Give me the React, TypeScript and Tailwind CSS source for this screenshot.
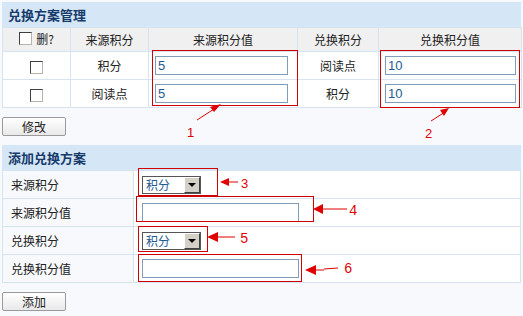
import React from "react";

const cjk = "font-['Noto_Sans_CJK_SC','Liberation_Sans',sans-serif]";

// ── small widgets ────────────────────────────────────────────────────────────

function Check() {
  return (
    <span className="inline-block w-[13px] h-[13px] bg-white border border-t-[#404040] border-l-[#404040] border-r-[#b8b4ac] border-b-[#b8b4ac] align-middle" />
  );
}

function TextBox({ value = "", width }: { value?: string; width: string }) {
  return (
    <div
      className={`${width} h-[19px] border border-[#7f9db9] bg-white flex items-center px-[2px] text-[13px] leading-none text-[#1d5b94] font-['Liberation_Sans',sans-serif]`}
    >
      {value}
    </div>
  );
}

function Select() {
  return (
    <div className="w-[59px] h-[18px] border border-[#555] bg-white flex items-stretch">
      <div className={`flex-1 flex items-center pl-[3px] text-[12px] text-[#1d5b94] ${cjk}`}>积分</div>
      <div className="w-[16px] bg-[#d4d0c8] border border-t-white border-l-white border-r-[#404040] border-b-[#404040] flex items-center justify-center">
        <span className="w-0 h-0 border-l-[4px] border-r-[4px] border-t-[4px] border-l-transparent border-r-transparent border-t-black" />
      </div>
    </div>
  );
}

function Btn({ label }: { label: string }) {
  return (
    <button
      className={`w-[64px] h-[19px] text-[12px] leading-none text-[#222] bg-gradient-to-b from-white to-[#e9e9e9] border border-[#9a9a9a] rounded-[2px] ${cjk}`}
    >
      {label}
    </button>
  );
}

function SectionTitle({ text }: { text: string }) {
  return (
    <div className={`h-[25px] bg-[#d5e6f6] flex items-center pl-[6px] text-[13px] font-bold text-[#163a6a] ${cjk}`}>
      {text}
    </div>
  );
}

// ── annotations (red boxes / arrows laid over the forms) ─────────────────────

function Annotations() {
  const red = "#e00000";
  return (
    <>
      <div className="absolute left-[152px] top-[50px] w-[146px] h-[56px] border border-[#d00000]" />
      <div className="absolute left-[380px] top-[50px] w-[140px] h-[58px] border border-[#d00000]" />
      <div className="absolute left-[138px] top-[168px] w-[80px] h-[28px] border border-[#d00000]" />
      <div className="absolute left-[136px] top-[196px] w-[178px] h-[26px] border border-[#d00000]" />
      <div className="absolute left-[138px] top-[226px] w-[70px] h-[26px] border border-[#d00000]" />
      <div className="absolute left-[138px] top-[254px] w-[164px] h-[28px] border border-[#d00000]" />

      <svg className="absolute inset-0 pointer-events-none" width={523} height={316}>
        {/* 1 */}
        <line x1={197} y1={120} x2={214} y2={109} stroke={red} />
        <polygon points="221,104 210,107 214,112" fill={red} />
        {/* 2 */}
        <line x1={431} y1={121} x2={445} y2={112} stroke={red} />
        <polygon points="449,108 440,110 444,116" fill={red} />
        {/* 3 */}
        <line x1={228} y1={182} x2={238} y2={182} stroke={red} />
        <polygon points="220,182 229,178 229,186" fill={red} />
        {/* 4 */}
        <line x1={322} y1={209} x2={347} y2={209} stroke={red} />
        <polygon points="313,209 323,204 323,214" fill={red} />
        {/* 5 */}
        <line x1={217} y1={237} x2={235} y2={237} stroke={red} />
        <polygon points="207,237 218,232 218,242" fill={red} />
        {/* 6 */}
        <line x1={315} y1={270} x2={324} y2={270} stroke={red} />
        <line x1={324} y1={269} x2={338} y2={268} stroke={red} />
        <polygon points="305,270 316,265 316,275" fill={red} />

        <g fill={red} fontFamily="'Liberation Sans', sans-serif" fontSize="13">
          <text x={187} y={137}>1</text>
          <text x={425} y={138}>2</text>
          <text x={241} y={188}>3</text>
        </g>
        <g fill={red} fontFamily="'Liberation Mono', monospace" fontSize="14">
          <text x={349} y={215}>4</text>
          <text x={240} y={243}>5</text>
          <text x={344} y={273}>6</text>
        </g>
      </svg>
    </>
  );
}

// ── page ─────────────────────────────────────────────────────────────────────

const cell = "border border-[#d6e4f1] text-center text-[12px] text-[#222]";

export default function App() {
  const rows = [
    { src: "积分", srcVal: "5", dst: "阅读点", dstVal: "10" },
    { src: "阅读点", srcVal: "5", dst: "积分", dstVal: "10" },
  ];

  const addRows: { label: string; field: React.ReactNode }[] = [
    { label: "来源积分", field: <Select /> },
    { label: "来源积分值", field: <TextBox width="w-[157px]" /> },
    { label: "兑换积分", field: <Select /> },
    { label: "兑换积分值", field: <TextBox width="w-[157px]" /> },
  ];

  return (
    <div className={`relative w-[523px] h-[316px] bg-[#f8f9fd] pt-[2px] pl-[2px] ${cjk}`}>
      <div className="w-[519px] flex flex-col">
        {/* Exchange plans */}
        <SectionTitle text="兑换方案管理" />
        <table className="w-full table-fixed border-collapse bg-white">
          <colgroup>
            <col className="w-[68px]" />
            <col className="w-[78px]" />
            <col className="w-[149px]" />
            <col className="w-[81px]" />
            <col className="w-[143px]" />
          </colgroup>
          <thead>
            <tr className="h-[24px] bg-[#f0f0f0]">
              <th className={`${cell} font-normal`}>
                <span className="inline-flex items-center gap-[4px]">
                  <Check />
                  删?
                </span>
              </th>
              <th className={`${cell} font-normal`}>来源积分</th>
              <th className={`${cell} font-normal`}>来源积分值</th>
              <th className={`${cell} font-normal`}>兑换积分</th>
              <th className={`${cell} font-normal`}>兑换积分值</th>
            </tr>
          </thead>
          <tbody>
            {rows.map((r, i) => (
              <tr key={i} className="h-[28px]">
                <td className={cell}>
                  <Check />
                </td>
                <td className={cell}>{r.src}</td>
                <td className={`${cell} px-[6px]`}>
                  <TextBox value={r.srcVal} width="w-[133px]" />
                </td>
                <td className={cell}>{r.dst}</td>
                <td className={`${cell} px-[6px]`}>
                  <TextBox value={r.dstVal} width="w-[131px]" />
                </td>
              </tr>
            ))}
          </tbody>
        </table>

        <div className="h-[37px] flex items-center">
          <Btn label="修改" />
        </div>

        {/* Add plan */}
        <SectionTitle text="添加兑换方案" />
        <table className="w-full table-fixed border-collapse">
          <colgroup>
            <col className="w-[131px]" />
            <col />
          </colgroup>
          <tbody>
            {addRows.map((r) => (
              <tr key={r.label} className="h-[28px]">
                <td className="border border-[#d6e4f1] bg-[#f7f9fc] pl-[8px] text-[12px] text-[#222]">
                  {r.label}
                </td>
                <td className="border border-[#d6e4f1] bg-white pl-[8px]">{r.field}</td>
              </tr>
            ))}
          </tbody>
        </table>

        <div className="h-[37px] flex items-center">
          <Btn label="添加" />
        </div>
      </div>

      <Annotations />
    </div>
  );
}
